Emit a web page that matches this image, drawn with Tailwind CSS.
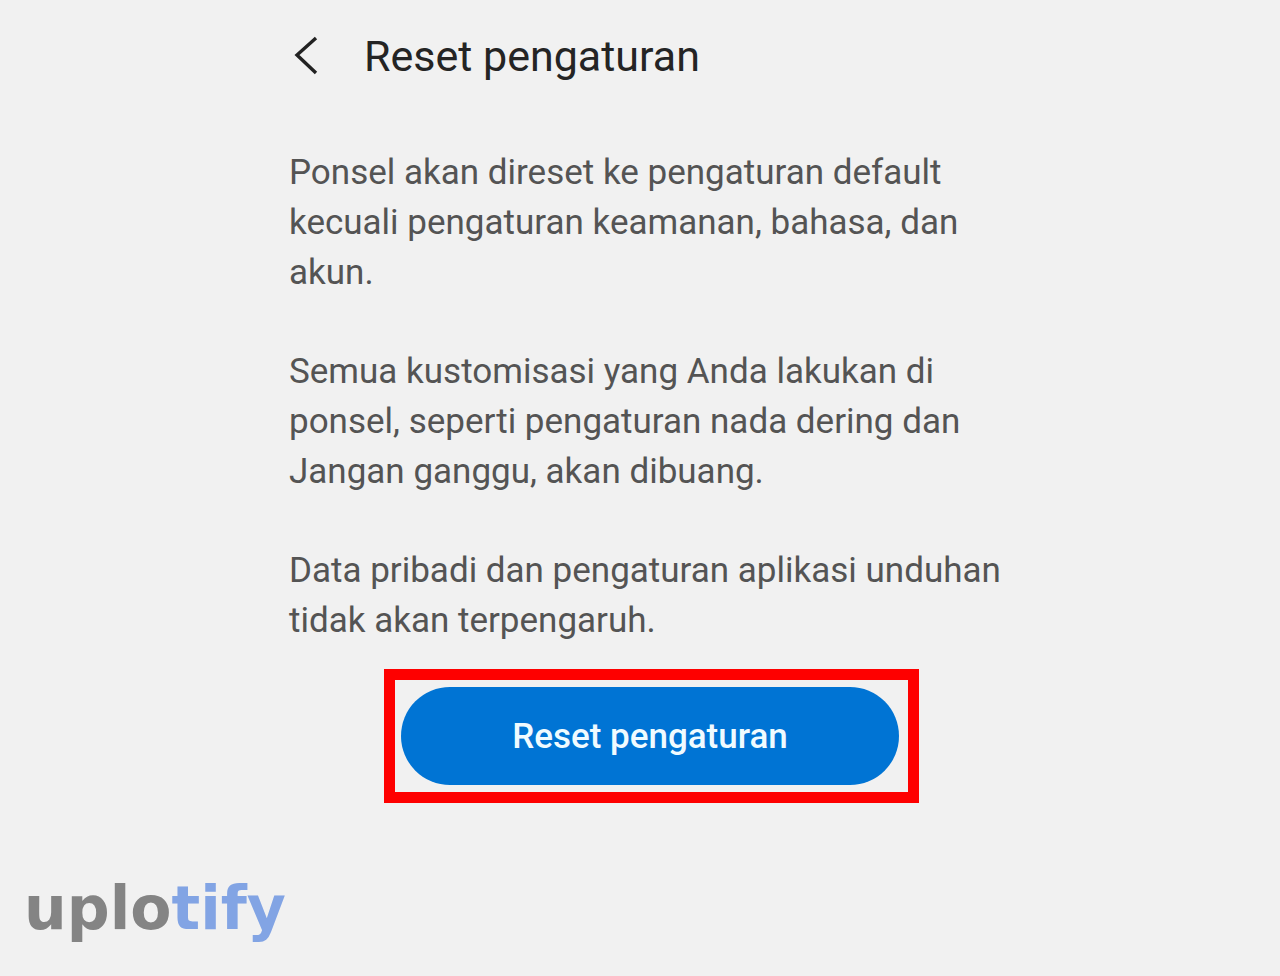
<!DOCTYPE html>
<html lang="id">
<head>
    <meta charset="UTF-8">
    <meta name="viewport" content="width=device-width, initial-scale=1.0">
    <title>Reset pengaturan</title>
    <script src="https://cdn.jsdelivr.net/npm/@tailwindcss/browser@4"></script>
</head>
<body class="bg-[#f1f1f1] font-[Roboto,sans-serif] min-h-screen flex flex-col">

    <div class="w-full max-w-[720px] mx-auto px-[9px]">
        <!-- Header -->
        <header class="flex items-center gap-[43px] pt-7">
            <button type="button" aria-label="Kembali" class="w-8 h-14 flex items-center">
                <svg class="w-8 h-10" viewBox="0 0 32 40" fill="none" stroke="#222222" stroke-width="3.4">
                    <path d="M27 2 L8 19 L27 37"/>
                </svg>
            </button>
            <h1 class="text-[43px] leading-[56px] text-[#242424]">Reset pengaturan</h1>
        </header>

        <!-- Content -->
        <main class="pt-16">
            <div class="flex flex-col gap-[49px] text-[35px] leading-[50px] text-[#545454]">
                <p>Ponsel akan direset ke pengaturan default<br>kecuali pengaturan keamanan, bahasa, dan<br>akun.</p>
                <p>Semua kustomisasi yang Anda lakukan di<br>ponsel, seperti pengaturan nada dering dan<br>Jangan ganggu, akan dibuang.</p>
                <p class="sm:whitespace-nowrap">Data pribadi dan pengaturan aplikasi unduhan<br>tidak akan terpengaruh.</p>
            </div>

            <!-- Highlighted button -->
            <div class="sm:pl-[23px] pt-[23px]">
                <div class="w-full max-w-[535px] mx-auto border-[11px] border-[#fe0000] py-[7px] pl-[6px] pr-[9px]">
                    <button type="button" class="w-full h-[98px] pt-[2px] rounded-full bg-[#0074d4] text-[#f0fbff] text-[35px] font-medium">Reset pengaturan</button>
                </div>
            </div>
        </main>
    </div>

    <!-- Brand -->
    <footer class="mt-auto pl-6 pb-7">
        <a href="#" class="block font-['DejaVu_Sans',sans-serif] font-bold text-[60px] leading-[80px] text-[#848484]">uplo<span class="text-[#82a4e4]">tify</span></a>
    </footer>

</body>
</html>
